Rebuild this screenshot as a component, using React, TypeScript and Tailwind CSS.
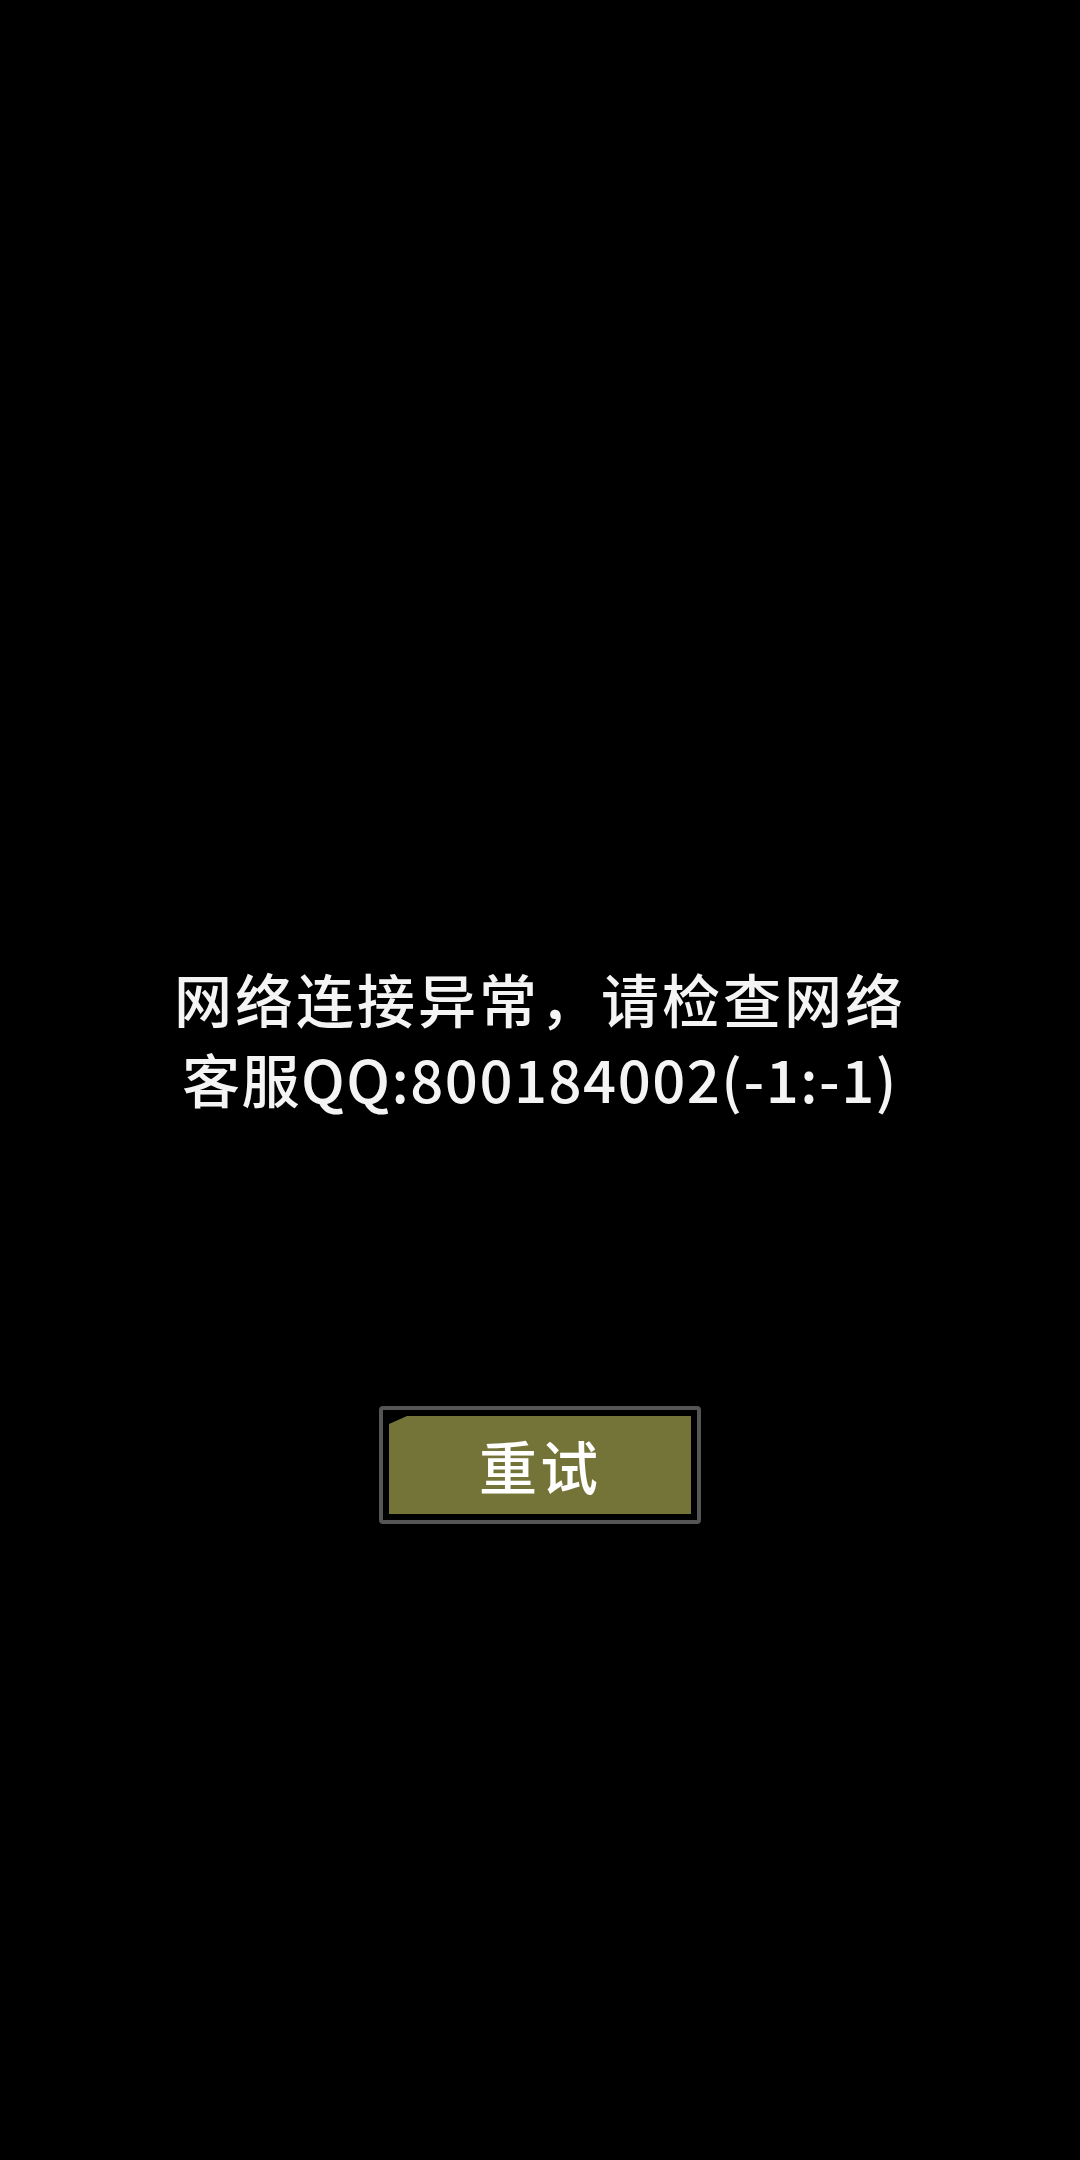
import React from 'react';

const FONT = '"Noto Sans CJK SC", "Noto Sans", sans-serif';

export default function App() {
  return (
    <div
      className="min-h-[2160px] w-full bg-black flex flex-col items-center pt-[958px]"
      style={{ fontFamily: FONT }}
    >
      {/* error message */}
      <div className="flex flex-col items-center text-[#f4f4f4] text-[58px] leading-[80px] font-medium">
        <p className="tracking-[3px]">网络连接异常，请检查网络</p>
        <p className="tracking-[1.5px]">客服QQ:800184002(-1:-1)</p>
      </div>

      {/* retry button */}
      <button className="mt-[288px] w-[322px] h-[118px] rounded-[4px] border-[4px] border-[#555555] bg-black p-[6px]">
        <div className="w-full h-full bg-[#747439] flex items-center justify-center [clip-path:polygon(18px_0,100%_0,100%_100%,0_100%,0_8px)]">
          <span className="text-white text-[58px] leading-none tracking-[3px] font-medium">重试</span>
        </div>
      </button>
    </div>
  );
}
